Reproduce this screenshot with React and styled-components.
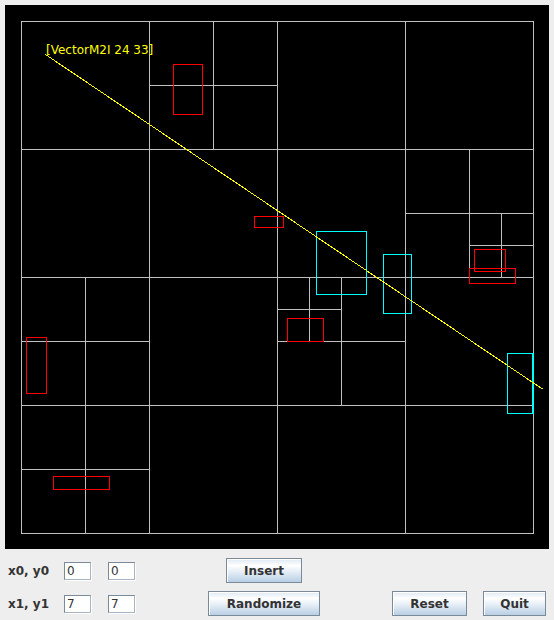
import styled, { createGlobalStyle } from 'styled-components';

const GlobalStyle = createGlobalStyle`
  html, body {
    margin: 0;
    padding: 0;
    background: #eeeeee;
  }
  body {
    font-family: 'DejaVu Sans', 'Liberation Sans', sans-serif;
  }
`;

const StyledWindow = styled.div`
  display: flex;
  flex-direction: column;
  width: 554px;
  height: 620px;
  padding: 5px 5px 0 5px;
  box-sizing: border-box;
  background: #eeeeee;
`;

const StyledCanvas = styled.svg`
  display: block;
  width: 544px;
  height: 544px;
  background: #000;
  flex-shrink: 0;
`;

const StyledControls = styled.div`
  display: grid;
  grid-template-columns: 56px 44px 100px 112px 72px 75px 16px 63px;
  grid-template-rows: 25px 25px;
  row-gap: 8px;
  align-items: center;
  padding: 9px 0 0 3px;
`;

const StyledLabel = styled.span`
  font-weight: 700;
  font-size: 12px;
  color: #333;
  grid-column: 1;
  grid-row: ${(p) => p.$row};
`;

const StyledField = styled.div`
  grid-column: ${(p) => p.$col};
  grid-row: ${(p) => p.$row};
  width: 27px;
  height: 18px;
  box-sizing: border-box;
  border: 1px solid #7a8a99;
  border-right-color: #a8b4bf;
  border-bottom-color: #a8b4bf;
  box-shadow: 1px 1px 0 #fff;
  background: #fff;
  font-size: 12px;
  line-height: 16px;
  padding-left: 2px;
  color: #333;
`;

const StyledButton = styled.button`
  grid-column: ${(p) => p.$col};
  grid-row: ${(p) => p.$row};
  justify-self: ${(p) => p.$justify || 'stretch'};
  width: ${(p) => p.$width}px;
  height: 25px;
  box-sizing: border-box;
  margin: 0;
  padding: 0;
  border: 1px solid #7a8a99;
  box-shadow: inset 1px 1px 0 #fff;
  background: linear-gradient(
    to bottom,
    #dde8f3 0%,
    #ffffff 28%,
    #e6eef7 55%,
    #b8cfe5 100%
  );
  font-family: 'DejaVu Sans', 'Liberation Sans', sans-serif;
  font-weight: 700;
  font-size: 12px;
  color: #333;
  cursor: pointer;
`;

// quadtree cell borders, in page pixels
const gridLines = [
  [149, 21, 149, 533],
  [277, 21, 277, 533],
  [405, 21, 405, 533],
  [21, 149, 533, 149],
  [21, 277, 533, 277],
  [21, 405, 533, 405],
  [213, 21, 213, 149],
  [149, 85, 277, 85],
  [469, 149, 469, 277],
  [405, 213, 533, 213],
  [501, 213, 501, 277],
  [469, 245, 533, 245],
  [341, 277, 341, 405],
  [277, 341, 405, 341],
  [309, 277, 309, 341],
  [277, 309, 341, 309],
  [85, 277, 85, 533],
  [21, 341, 149, 341],
  [21, 469, 149, 469],
];

const boxes = [
  { l: 173, t: 64, r: 202, b: 114, c: '#ff0000' },
  { l: 254, t: 216, r: 283, b: 227, c: '#ff0000' },
  { l: 474, t: 249, r: 505, b: 271, c: '#ff0000' },
  { l: 469, t: 268, r: 515, b: 283, c: '#ff0000' },
  { l: 287, t: 318, r: 323, b: 341, c: '#ff0000' },
  { l: 26, t: 337, r: 46, b: 393, c: '#ff0000' },
  { l: 53, t: 476, r: 109, b: 489, c: '#ff0000' },
  { l: 316, t: 231, r: 366, b: 294, c: '#00ffff' },
  { l: 383, t: 254, r: 411, b: 313, c: '#00ffff' },
  { l: 507, t: 353, r: 532, b: 413, c: '#00ffff' },
];

const QuadCanvas = () => (
  <StyledCanvas viewBox="5 5 544 544" shapeRendering="crispEdges">
    <rect x="21.5" y="21.5" width="512" height="512" fill="none" stroke="#c0c0c0" />
    {gridLines.map(([x1, y1, x2, y2], i) => (
      <line
        key={i}
        x1={x1 + 0.5}
        y1={y1 + 0.5}
        x2={x2 + 0.5}
        y2={y2 + 0.5}
        stroke="#c0c0c0"
      />
    ))}
    {boxes.map((b, i) => (
      <rect
        key={i}
        x={b.l + 0.5}
        y={b.t + 0.5}
        width={b.r - b.l}
        height={b.b - b.t}
        fill="none"
        stroke={b.c}
      />
    ))}
    <line x1="533.5" y1="353" x2="533.5" y2="414" stroke="#00ffff" />
    <line x1="45.5" y1="54.5" x2="542.5" y2="389" stroke="#ffff00" />
    <text
      x="46"
      y="54"
      fill="#ffff00"
      fontSize="12"
      fontFamily="'DejaVu Sans', sans-serif"
      shapeRendering="auto"
    >
      [VectorM2I 24 33]
    </text>
  </StyledCanvas>
);

const App = () => {
  return (
    <StyledWindow>
      <GlobalStyle />
      <QuadCanvas />
      <StyledControls>
        <StyledLabel $row={1}>x0, y0</StyledLabel>
        <StyledField $col={2} $row={1}>0</StyledField>
        <StyledField $col={3} $row={1}>0</StyledField>
        <StyledButton $col={4} $row={1} $width={76} $justify="center">
          Insert
        </StyledButton>

        <StyledLabel $row={2}>x1, y1</StyledLabel>
        <StyledField $col={2} $row={2}>7</StyledField>
        <StyledField $col={3} $row={2}>7</StyledField>
        <StyledButton $col={4} $row={2} $width={112}>
          Randomize
        </StyledButton>
        <StyledButton $col={6} $row={2} $width={75}>
          Reset
        </StyledButton>
        <StyledButton $col={8} $row={2} $width={63}>
          Quit
        </StyledButton>
      </StyledControls>
    </StyledWindow>
  );
};

export default App;
